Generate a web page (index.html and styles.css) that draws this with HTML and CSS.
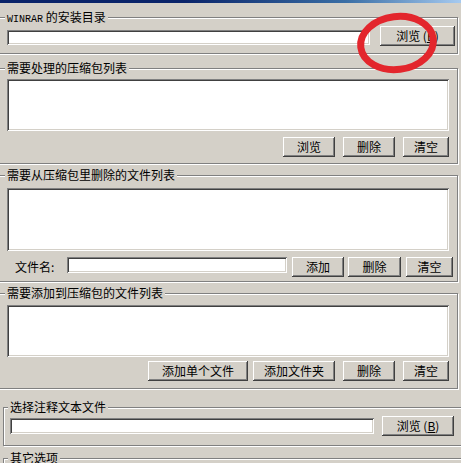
FILE: index.html
```html
<!DOCTYPE html>
<html lang="zh-CN">
<head>
  <meta charset="UTF-8" />
  <meta name="viewport" content="width=device-width, initial-scale=1.0"/>
  <title>WinRAR 批处理</title>
  <link rel="stylesheet" href="styles.css">
</head>
<body>

<div class="window">
  <!-- title bar, mostly cut off -->
  <div class="titlebar"></div>

  <!-- WinRAR path -->
  <div class="group group-path">
    <div class="group-title"><span class="latin">WINRAR</span> 的安装目录</div>
    <div class="row row-path">
      <div class="field field-path"></div>
      <button class="btn btn-browse-main">浏览 (<u>B</u>)</button>
    </div>
  </div>

  <!-- archives to process -->
  <div class="group group-archives">
    <div class="group-title">需要处理的压缩包列表</div>
    <div class="listbox list-archives"></div>
    <div class="row row-buttons">
      <button class="btn btn-52">浏览</button>
      <button class="btn btn-52 gap-8">删除</button>
      <button class="btn btn-46 gap-8">清空</button>
    </div>
  </div>

  <!-- files to delete -->
  <div class="group group-delete">
    <div class="group-title">需要从压缩包里删除的文件列表</div>
    <div class="listbox list-delete"></div>
    <div class="row row-filename">
      <span class="label">文件名:</span>
      <div class="field field-name"></div>
      <button class="btn btn-52 gap-5">添加</button>
      <button class="btn btn-53 gap-4">删除</button>
      <button class="btn btn-47 gap-5">清空</button>
    </div>
  </div>

  <!-- files to add -->
  <div class="group group-add">
    <div class="group-title">需要添加到压缩包的文件列表</div>
    <div class="listbox list-add"></div>
    <div class="row row-buttons row-add">
      <button class="btn btn-100">添加单个文件</button>
      <button class="btn btn-82 gap-5">添加文件夹</button>
      <button class="btn btn-52 gap-8">删除</button>
      <button class="btn btn-46 gap-8">清空</button>
    </div>
  </div>

  <!-- comment file -->
  <div class="group group-wide group-comment">
    <div class="group-title">选择注释文本文件</div>
    <div class="row row-comment">
      <div class="field field-comment"></div>
      <button class="btn btn-browse-comment">浏览 (<u>B</u>)</button>
    </div>
  </div>

  <!-- other options (cut off) -->
  <div class="group group-wide group-other">
    <div class="group-title">其它选项</div>
    <div class="spacer"></div>
  </div>

  <!-- red marker drawn over the screenshot -->
  <svg class="marker" width="90" height="70" viewBox="0 0 90 70">
    <ellipse cx="43" cy="33" rx="36.5" ry="26.5" transform="rotate(-7 43 33)"
             fill="none" stroke="#e3262d" stroke-width="7"/>
  </svg>
</div>

</body>
</html>
```

FILE: styles.css
```css
* {
  margin: 0;
  padding: 0;
  box-sizing: border-box;
}

body {
  font-family: "Noto Sans CJK SC", "Liberation Sans", sans-serif;
  font-size: 12px;
  color: #000;
  background-color: #d4d0c8;
  overflow: hidden;
}

.window {
  position: relative;
  width: 461px;
  height: 463px;
  overflow: hidden;
  background-color: #d4d0c8;
}

.titlebar {
  height: 3px;
  background: linear-gradient(to right, #0a246a 0%, #0a246a 40%, #3a6ea5 75%, #a6caf0 100%);
}

/* group boxes: etched frame */
.group {
  border: 1px solid #808080;
  box-shadow: inset 1px 1px 0 #fff, 1px 1px 0 #fff;
  margin-left: -2px;
  width: 460px;
}

.group-title {
  width: fit-content;
  height: 14px;
  line-height: 14px;
  margin: -8px 0 0 6px;
  padding: 0 2px;
  background-color: #d4d0c8;
  position: relative;
  white-space: nowrap;
}

.latin {
  font-family: "Liberation Mono", monospace;
  font-size: 10px;
}

.group-wide {
  margin-left: 3px;
  width: 480px;
}

.group-wide .group-title {
  margin-left: 4px;
}

.group-path {
  margin-top: 14px;
  padding-bottom: 7px;
}

.group-archives {
  margin-top: 14px;
  padding-bottom: 6px;
}

.group-delete {
  margin-top: 11px;
  padding-bottom: 4px;
}

.group-add {
  margin-top: 11px;
  padding-bottom: 7px;
}

.group-comment {
  margin-top: 18px;
  padding-bottom: 9px;
}

.group-other {
  margin-top: 12px;
}

.spacer {
  height: 40px;
}

.row {
  display: flex;
}

/* sunken white fields */
.field,
.listbox {
  background-color: #fff;
  box-shadow: inset 1px 1px 0 #808080, inset -1px -1px 0 #fff,
              inset 2px 2px 0 #404040, inset -2px -2px 0 #d4d0c8;
}

.listbox {
  margin: 0 8px 0 8px;
}

.list-archives {
  margin-top: 4px;
  height: 52px;
}

.list-delete {
  margin-top: 6px;
  height: 63px;
}

.list-add {
  margin-top: 5px;
  height: 52px;
}

/* raised buttons */
.btn {
  height: 20px;
  font-family: inherit;
  font-size: 12px;
  line-height: 18px;
  color: #000;
  background-color: #d4d0c8;
  border: none;
  box-shadow: inset -1px -1px 0 #404040, inset 1px 1px 0 #fff,
              inset -2px -2px 0 #808080, inset 2px 2px 0 #d4d0c8;
  flex-shrink: 0;
  white-space: nowrap;
}

.btn u {
  text-decoration: underline;
}

.btn-46 { width: 46px; }
.btn-47 { width: 47px; }
.btn-52 { width: 52px; }
.btn-53 { width: 53px; }
.btn-82 { width: 82px; }
.btn-100 { width: 100px; }

.gap-4 { margin-left: 4px; }
.gap-5 { margin-left: 5px; }
.gap-8 { margin-left: 8px; }

.row-path {
  margin-top: 2px;
  padding: 0 2px 0 8px;
  align-items: flex-end;
}

.field-path {
  flex: 1;
  height: 15px;
  margin-bottom: 1px;
}

.btn-browse-main {
  width: 75px;
  margin-left: 10px;
}

.row-buttons {
  justify-content: flex-end;
  padding-right: 8px;
  margin-top: 6px;
}

.row-add {
  margin-top: 4px;
}

.row-filename {
  margin-top: 6px;
  padding-left: 16px;
  align-items: flex-start;
}

.label {
  width: 52px;
  line-height: 20px;
}

.field-name {
  width: 220px;
  height: 16px;
}

.row-comment {
  margin-top: 2px;
  padding-left: 6px;
  align-items: flex-end;
}

.field-comment {
  width: 364px;
  height: 16px;
  margin-bottom: 2px;
}

.btn-browse-comment {
  width: 72px;
  margin-left: 8px;
}

.marker {
  position: absolute;
  left: 354px;
  top: 10px;
}
```
